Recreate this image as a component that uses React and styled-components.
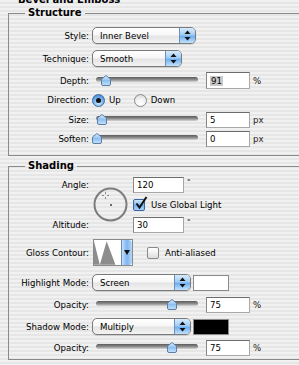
import React from "react";
import styled, { createGlobalStyle } from "styled-components";

const GlobalStyle = createGlobalStyle`
  html, body {
    margin: 0;
    padding: 0;
  }
  body {
    width: 299px;
    height: 365px;
    overflow: hidden;
  }
`;

const Window = styled.div`
  width: 299px;
  height: 365px;
  overflow: hidden;
  background: repeating-linear-gradient(to bottom, #f1f1f1 0 2px, #e6e6e6 2px 4px);
  font-family: "DejaVu Sans", "Liberation Sans", sans-serif;
  font-size: 8.6px;
  color: #000;
`;

const Title = styled.div`
  margin-top: -6px;
  padding-left: 18px;
  height: 12px;
  line-height: 12px;
  font-size: 10px;
  font-weight: bold;
`;

const Group = styled.fieldset`
  margin: ${(p) => p.$mt}px 0 0 8px;
  width: 330px;
  min-width: 0;
  box-sizing: border-box;
  padding: 5px 0 ${(p) => p.$pb || 0}px 0;
  border: 1px solid #8a8a8a;
`;

const Legend = styled.legend`
  margin-left: 16px;
  padding: 0 3px;
  height: 12px;
  line-height: 12px;
  font-size: 10px;
  font-weight: bold;
`;

const Row = styled.div`
  display: grid;
  grid-template-columns: 80px auto;
  column-gap: 3px;
  align-items: center;
  height: ${(p) => p.$h}px;
  margin-top: ${(p) => p.$mt || 0}px;
`;

const Label = styled.span`
  text-align: right;
  white-space: nowrap;
`;

const Controls = styled.div`
  display: flex;
  align-items: center;
  gap: ${(p) => (p.$gap === undefined ? 4 : p.$gap)}px;
`;

/* popup menu */
const PopupBox = styled.div`
  width: ${(p) => p.$w}px;
  height: 17px;
  box-sizing: border-box;
  border: 1px solid #7a7a7a;
  border-radius: 5px;
  overflow: hidden;
  display: flex;
  align-items: center;
  background: linear-gradient(#ffffff 0%, #f7f7f7 45%, #e4e4e4 55%, #f3f3f3 100%);
  box-shadow: 0 1px 1px rgba(0, 0, 0, 0.12);
`;

const PopupText = styled.span`
  flex: 1;
  padding-left: 7px;
  white-space: nowrap;
`;

const PopupCap = styled.span`
  width: 15px;
  align-self: stretch;
  border-left: 1px solid #6c8fba;
  background: linear-gradient(#d6ebfd 0%, #a3cdf5 45%, #6eaff0 55%, #c2e1fc 100%);
  display: grid;
  place-items: center;
`;

const Popup = ({ w, children }) => (
  <PopupBox $w={w}>
    <PopupText>{children}</PopupText>
    <PopupCap>
      <svg width="7" height="11" viewBox="0 0 7 11">
        <path d="M3.5 0.5 L6.5 4 L0.5 4 Z" fill="#111" />
        <path d="M3.5 10.5 L6.5 7 L0.5 7 Z" fill="#111" />
      </svg>
    </PopupCap>
  </PopupBox>
);

/* slider */
const SliderBox = styled.div`
  position: relative;
  width: 110px;
  height: 14px;
`;

const Track = styled.div`
  position: absolute;
  left: 4px;
  right: 4px;
  top: 3px;
  height: 5px;
  border-radius: 3px;
  background: linear-gradient(#5a5a5a, #8f8f8f 55%, #d6d6d6);
`;

const ThumbIcon = styled.svg`
  position: absolute;
  top: 1px;
`;

const Slider = ({ pos }) => (
  <SliderBox>
    <Track />
    <ThumbIcon width="10" height="11" viewBox="0 0 10 11" style={{ left: pos }}>
      <defs>
        <linearGradient id="thumbg" x1="0" y1="0" x2="0" y2="1">
          <stop offset="0" stopColor="#e4f1fd" />
          <stop offset="0.5" stopColor="#8fc0f0" />
          <stop offset="1" stopColor="#c6e2fb" />
        </linearGradient>
      </defs>
      <path
        d="M5 0.5 L9.5 4 L9.5 9 Q9.5 10.5 8 10.5 L2 10.5 Q0.5 10.5 0.5 9 L0.5 4 Z"
        fill="url(#thumbg)"
        stroke="#5b7ea6"
      />
    </ThumbIcon>
  </SliderBox>
);

/* text fields */
const Field = styled.div`
  width: ${(p) => p.$w || 44}px;
  height: ${(p) => p.$h || 16}px;
  box-sizing: border-box;
  padding-left: 3px;
  display: flex;
  align-items: center;
  background: #fff;
  border: 1px solid #a8a8a8;
  border-top-color: #6c6c6c;
  border-left-color: #888;
`;

const Selected = styled.span`
  background: #c9c9c9;
  padding: 0 1px;
`;

const FieldGroup = styled.div`
  display: flex;
  align-items: ${(p) => (p.$sup ? "flex-start" : "center")};
  gap: 3px;
`;

const Unit = styled.span`
  color: #2a2218;
  font-size: ${(p) => (p.$sup ? "7px" : "inherit")};
  line-height: ${(p) => (p.$sup ? "10px" : "normal")};
`;

/* radio and checkbox */
const Radio = styled.span`
  width: 13px;
  height: 13px;
  box-sizing: border-box;
  border-radius: 50%;
  border: 1px solid ${(p) => (p.$on ? "#3a66a0" : "#8a8a8a")};
  background: ${(p) =>
    p.$on
      ? "radial-gradient(circle at 50% 75%, #c7e6ff, #6aa8ea 60%, #3b73bd)"
      : "radial-gradient(circle at 50% 80%, #ffffff, #f2f2f2 50%, #cdcdcd)"};
  display: grid;
  place-items: center;
  &::after {
    content: "";
    display: ${(p) => (p.$on ? "block" : "none")};
    width: 5px;
    height: 5px;
    border-radius: 50%;
    background: #111;
  }
`;

const Choice = styled.span`
  display: flex;
  align-items: center;
  gap: ${(p) => p.$gap || 4}px;
`;

const CheckBox = styled.span`
  position: relative;
  width: 12px;
  height: 12px;
  box-sizing: border-box;
  border-radius: 2px;
  border: 1px solid ${(p) => (p.$on ? "#3a66a0" : "#8a8a8a")};
  background: ${(p) =>
    p.$on
      ? "linear-gradient(#cfe7fd, #76b1ee 55%, #a9d3fa)"
      : "linear-gradient(#ffffff, #eeeeee 55%, #dcdcdc)"};
`;

const Tick = styled.svg`
  position: absolute;
  left: 1px;
  top: -3px;
  overflow: visible;
`;

const Check = ({ on }) => (
  <CheckBox $on={on}>
    {on && (
      <Tick width="12" height="12" viewBox="0 0 12 12">
        <path d="M1.5 6.5 L4.5 10.5 L11.5 0" fill="none" stroke="#111" strokeWidth="2" />
      </Tick>
    )}
  </CheckBox>
);

/* angle block */
const AngleGrid = styled.div`
  display: grid;
  grid-template-columns: 80px 38px auto;
  grid-template-rows: 16px 24px 16px;
  column-gap: 3px;
  align-items: center;
`;

const AngleLabel = styled(Label)`
  grid-column: 1;
  grid-row: ${(p) => p.$row};
`;

const Dial = styled.svg`
  grid-column: 2;
  grid-row: 1 / 4;
  margin-left: 1px;
`;

const AngleCell = styled.div`
  grid-column: 3;
  grid-row: ${(p) => p.$row};
`;

/* contour */
const ContourBox = styled.div`
  display: flex;
  width: 40px;
  height: 27px;
  box-sizing: border-box;
  margin-left: 1px;
  border: 1px solid #8a8a8a;
  background: #fff;
`;

const ContourArrow = styled.span`
  width: 10px;
  border-left: 1px solid #6c8fba;
  border-radius: 0 3px 3px 0;
  background: linear-gradient(to right, #c3e0fc, #7db4ee 50%, #b4d8fb);
  display: grid;
  place-items: center;
`;

const Swatch = styled.div`
  width: 36px;
  height: 16px;
  box-sizing: border-box;
  border: 1px solid #8a8a8a;
  background: ${(p) => p.$color};
`;

const SliderRow = ({ label, pos, value, h, unit = "%", selected }) => (
  <Row $h={h}>
    <Label>{label}</Label>
    <Controls>
      <Slider pos={pos} />
      <FieldGroup>
        <Field $h={selected ? 17 : 16}>
          {selected ? <Selected>{value}</Selected> : value}
        </Field>
        <Unit>{unit}</Unit>
      </FieldGroup>
    </Controls>
  </Row>
);

export default function App() {
  return (
    <Window>
      <GlobalStyle />
      <Title>Bevel and Emboss</Title>

      <Group $mt={1} $pb={7}>
        <Legend>Structure</Legend>
        <Row $h={23}>
          <Label>Style:</Label>
          <Popup w={104}>Inner Bevel</Popup>
        </Row>
        <Row $h={23}>
          <Label>Technique:</Label>
          <Popup w={90}>Smooth</Popup>
        </Row>
        <SliderRow label="Depth:" pos={9} value="91" h={21} selected />
        <Row $h={18}>
          <Label>Direction:</Label>
          <Controls $gap={13}>
            <Choice>
              <Radio $on />
              Up
            </Choice>
            <Choice>
              <Radio />
              Down
            </Choice>
          </Controls>
        </Row>
        <SliderRow label="Size:" pos={5} value="5" h={21} unit="px" />
        <SliderRow label="Soften:" pos={0} value="0" h={18} unit="px" />
      </Group>

      <Group $mt={4}>
        <Legend>Shading</Legend>
        <AngleGrid>
          <AngleLabel $row={1}>Angle:</AngleLabel>
          <Dial width="36" height="36" viewBox="0 0 36 36">
            <circle cx="17.5" cy="17.5" r="16" fill="none" stroke="#7c7c7c" strokeWidth="2" />
            <rect x="17" y="17" width="2" height="2" fill="#6a6a6a" />
            <path
              d="M12.5 5 v2 M12.5 10 v2 M9 8.5 h2 M14 8.5 h2"
              stroke="#8a8a8a"
              strokeWidth="1"
            />
          </Dial>
          <AngleCell $row={1}>
            <FieldGroup $sup>
              <Field $w={51}>120</Field>
              <Unit $sup>°</Unit>
            </FieldGroup>
          </AngleCell>
          <AngleCell $row={2}>
            <Choice $gap={6}>
              <Check on />
              Use Global Light
            </Choice>
          </AngleCell>
          <AngleLabel $row={3}>Altitude:</AngleLabel>
          <AngleCell $row={3}>
            <FieldGroup $sup>
              <Field $w={51}>30</Field>
              <Unit $sup>°</Unit>
            </FieldGroup>
          </AngleCell>
        </AngleGrid>

        <Row $h={27} $mt={6}>
          <Label>Gloss Contour:</Label>
          <Controls $gap={14}>
            <ContourBox>
              <svg width="28" height="25" viewBox="0 0 28 25">
                <path d="M0 25 L0 1 L6 25 L13 1 L22 25 Z" fill="#8d8d8d" />
              </svg>
              <ContourArrow>
                <svg width="6" height="5" viewBox="0 0 6 5">
                  <path d="M0 0 H6 L3 5 Z" fill="#111" />
                </svg>
              </ContourArrow>
            </ContourBox>
            <Choice $gap={6}>
              <Check />
              Anti-aliased
            </Choice>
          </Controls>
        </Row>

        <Row $h={23} $mt={5}>
          <Label>Highlight Mode:</Label>
          <Controls $gap={2}>
            <Popup w={99}>Screen</Popup>
            <Swatch $color="#ffffff" />
          </Controls>
        </Row>
        <SliderRow label="Opacity:" pos={75} value="75" h={22} />
        <Row $h={21}>
          <Label>Shadow Mode:</Label>
          <Controls $gap={2}>
            <Popup w={99}>Multiply</Popup>
            <Swatch $color="#000000" />
          </Controls>
        </Row>
        <SliderRow label="Opacity:" pos={75} value="75" h={22} />
      </Group>
    </Window>
  );
}
